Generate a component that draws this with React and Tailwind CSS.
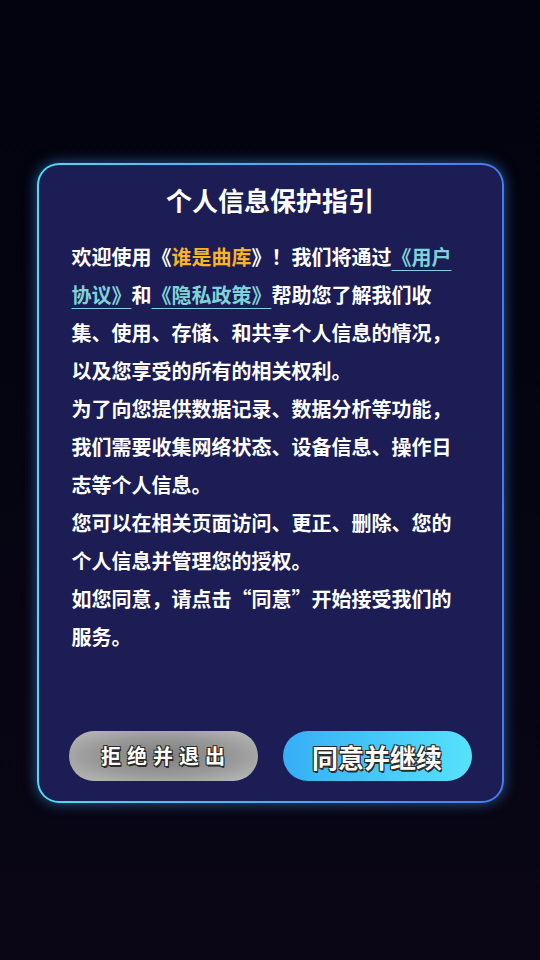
import React from "react";

const cjk = "font-['Noto_Sans_CJK_SC','Noto_Sans',sans-serif]";
const outline =
  "[text-shadow:1px_1px_0_#2a2a2a,-1px_-1px_0_#2a2a2a,1px_-1px_0_#2a2a2a,-1px_1px_0_#2a2a2a,1px_2px_0_#2a2a2a]";

const Link = ({ children }) => (
  <span className="text-[#7fd3d8] underline decoration-1 underline-offset-[5px]">
    {children}
  </span>
);

export default function App() {
  return (
    <div
      className={`min-h-screen flex items-center justify-center bg-gradient-to-b from-[#02030e] to-[#0a0615] ${cjk}`}
    >
      <div className="w-[467px] h-[640px] mt-[6px] rounded-[22px] p-[2px] bg-gradient-to-r from-[#4fdcf0] to-[#4b78ef] shadow-[0_0_14px_rgba(70,160,255,0.55)]">
        <div className="h-full rounded-[20px] bg-[#1c1d55] flex flex-col px-[33px] pt-[16px] pb-[20px]">
          <h1 className="text-center text-white font-bold text-[26px] leading-[38px]">
            个人信息保护指引
          </h1>
          <div className="mt-[19px] w-[397px] text-white font-bold text-[20px] leading-[38px]">
            <p>
              欢迎使用《<span className="text-[#f6b426]">谁是曲库</span>》！我们将通过
              <Link>《用户协议》</Link>和<Link>《隐私政策》</Link>
              帮助您了解我们收集、使用、存储、和共享个人信息的情况，以及您享受的所有的相关权利。
            </p>
            <p>
              为了向您提供数据记录、数据分析等功能，我们需要收集网络状态、设备信息、操作日志等个人信息。
            </p>
            <p>您可以在相关页面访问、更正、删除、您的个人信息并管理您的授权。</p>
            <p>如您同意，请点击“同意”开始接受我们的服务。</p>
          </div>
          <div className="mt-auto -mx-[3px] flex gap-[25px]">
            <button
              className={`w-[189px] h-[50px] rounded-full bg-[radial-gradient(ellipse_at_center,#7e7e7e_0%,#9a9a9a_55%,#bdbdbd_100%)] text-white font-bold text-[20px] tracking-[6px] pl-[6px] ${outline}`}
            >
              拒绝并退出
            </button>
            <button
              className={`w-[189px] h-[50px] rounded-full bg-gradient-to-r from-[#36aef5] to-[#56e2fb] text-white font-bold text-[26px] ${outline}`}
            >
              同意并继续
            </button>
          </div>
        </div>
      </div>
    </div>
  );
}
